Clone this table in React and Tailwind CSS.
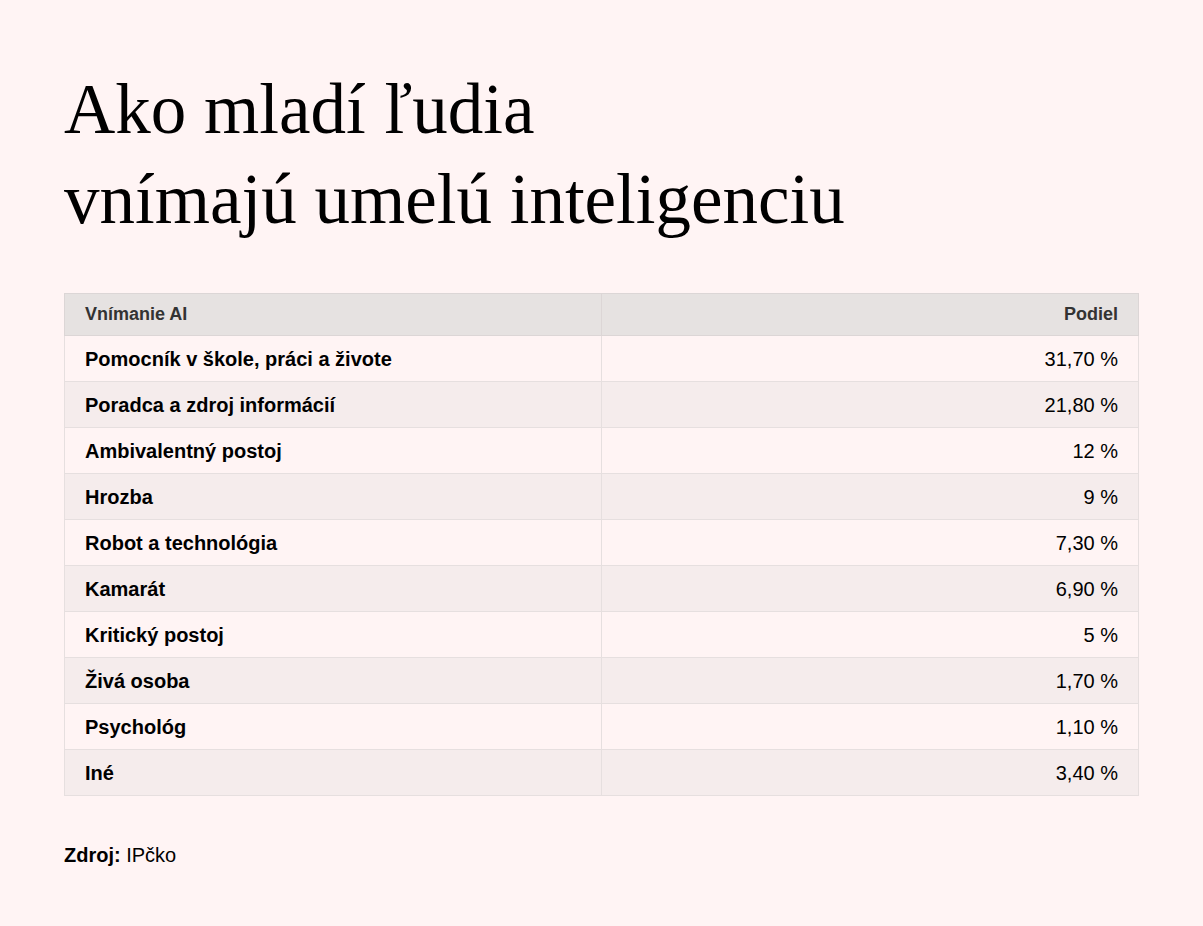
import React from "react";

const rows = [
  ["Pomocník v škole, práci a živote", "31,70 %"],
  ["Poradca a zdroj informácií", "21,80 %"],
  ["Ambivalentný postoj", "12 %"],
  ["Hrozba", "9 %"],
  ["Robot a technológia", "7,30 %"],
  ["Kamarát", "6,90 %"],
  ["Kritický postoj", "5 %"],
  ["Živá osoba", "1,70 %"],
  ["Psychológ", "1,10 %"],
  ["Iné", "3,40 %"],
];

export default function App() {
  return (
    <div className="min-h-[926px] bg-[#fff4f4] px-16 pt-16 pb-10 font-['Liberation_Sans',Arial,sans-serif] text-black">
      <h1 className="font-['Liberation_Serif','Times_New_Roman',serif] text-[71px] leading-[90px] font-normal">
        Ako mladí ľudia
        <br />
        vnímajú umelú inteligenciu
      </h1>
      <table className="mt-[49px] w-full border-collapse table-fixed border border-[#e6dfdf]">
        <thead>
          <tr className="bg-[#e6e2e1] h-[42px]">
            <th className="border border-[#dcd6d6] px-5 text-left text-[18px] font-bold text-[#333]">Vnímanie AI</th>
            <th className="border border-[#dcd6d6] px-5 text-right text-[18px] font-bold text-[#333]">Podiel</th>
          </tr>
        </thead>
        <tbody>
          {rows.map(([label, value], i) => (
            <tr key={label} className={i % 2 === 1 ? "bg-[#f5ecec] h-[46px]" : "bg-[#fff4f4] h-[46px]"}>
              <td className="border border-[#e6dfdf] px-5 text-left text-[20px] font-bold">{label}</td>
              <td className="border border-[#e6dfdf] px-5 text-right text-[20px]">{value}</td>
            </tr>
          ))}
        </tbody>
      </table>
      <p className="mt-[44px] text-[20px]">
        <span className="font-bold">Zdroj:</span> IPčko
      </p>
    </div>
  );
}
